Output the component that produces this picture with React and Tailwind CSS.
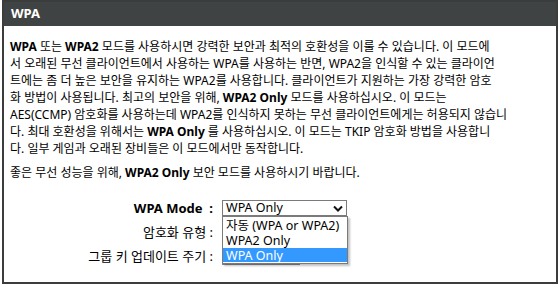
import React from 'react';

const font = { fontFamily: '"Noto Sans", "Noto Sans CJK KR", sans-serif' };

const Chevron = () => (
    <svg width="10" height="7" viewBox="0 0 10 7" className="shrink-0">
        <path d="M1 1.5 L5 5.5 L9 1.5" fill="none" stroke="#111" strokeWidth="2" />
    </svg>
);

const FakeSelect = ({ value, className = '' }) => (
    <div className={`h-[16px] border border-[#7a7a7a] bg-white flex items-center justify-between pl-[3px] pr-[3px] text-[12.5px] leading-none ${className}`}>
        <span>{value}</span>
        <Chevron />
    </div>
);

const App = () => {
    return (
        <div className="w-[559px] h-[285px] bg-white text-black" style={font}>
            <div className="ml-[2px] w-[556px] h-[284px] border-2 border-[#3b3d3d] flex flex-col">
                <div className="h-[24px] bg-[#404343] flex items-center px-[7px] text-white font-bold text-[13px]">
                    WPA
                </div>

                <div className="pl-[6px] pr-[8px] pt-[12px] text-[12px] leading-[17px]">
                    <p className="whitespace-nowrap">
                        <b>WPA</b> 또는 <b>WPA2</b> 모드를 사용하시면 강력한 보안과 최적의 호환성을 이룰 수 있습니다. 이 모드에<br />
                        서 오래된 무선 클라이언트에서 사용하는 WPA를 사용하는 반면, WPA2을 인식할 수 있는 클라이언<br />
                        트에는 좀 더 높은 보안을 유지하는 WPA2를 사용합니다. 클라이언트가 지원하는 가장 강력한 암호<br />
                        화 방법이 사용됩니다. 최고의 보안을 위해, <b>WPA2 Only</b> 모드를 사용하십시오. 이 모드는<br />
                        AES(CCMP) 암호화를 사용하는데 WPA2를 인식하지 못하는 무선 클라이언트에게는 허용되지 않습니<br />
                        다. 최대 호환성을 위해서는 <b>WPA Only</b> 를 사용하십시오. 이 모드는 TKIP 암호화 방법을 사용합니<br />
                        다. 일부 게임과 오래된 장비들은 이 모드에서만 동작합니다.
                    </p>
                    <p className="mt-[7px] whitespace-nowrap">
                        좋은 무선 성능을 위해, <b>WPA2 Only</b> 보안 모드를 사용하시기 바랍니다.
                    </p>

                    <div className="mt-[19px] flex flex-col gap-[8px] text-[13px]">
                        <div className="flex items-center h-[16px]">
                            <div className="w-[203px] text-right font-bold whitespace-nowrap">WPA Mode&nbsp;&nbsp;:</div>
                            <div className="ml-[9px] relative">
                                <FakeSelect value="WPA Only" className="w-[125px]" />
                                <div className="absolute z-10 left-0 top-[16px] w-[126px] border border-[#7a7a7a] bg-white shadow-[2px_2px_2px_rgba(0,0,0,0.25)] py-[1px] text-[12.5px] leading-[15px]">
                                    <div className="px-[3px] h-[15px] whitespace-nowrap">자동 (WPA or WPA2)</div>
                                    <div className="px-[3px] h-[15px] whitespace-nowrap">WPA2 Only</div>
                                    <div className="px-[3px] h-[14px] whitespace-nowrap bg-[#3399ff] text-white">WPA Only</div>
                                </div>
                            </div>
                        </div>
                        <div className="flex items-center h-[16px]">
                            <div className="w-[203px] text-right whitespace-nowrap">암호화 유형 :</div>
                            <div className="ml-[9px]">
                                <div className="w-[80px] h-[16px] border border-[#7a7a7a] bg-white" />
                            </div>
                        </div>
                        <div className="flex items-center h-[16px]">
                            <div className="w-[203px] text-right whitespace-nowrap">그룹 키 업데이트 주기 :</div>
                            <div className="ml-[9px]">
                                <div className="w-[78px] h-[17px] border border-[#8a8a8a] bg-white" />
                            </div>
                        </div>
                    </div>
                </div>
            </div>
        </div>
    );
};

export default App;
